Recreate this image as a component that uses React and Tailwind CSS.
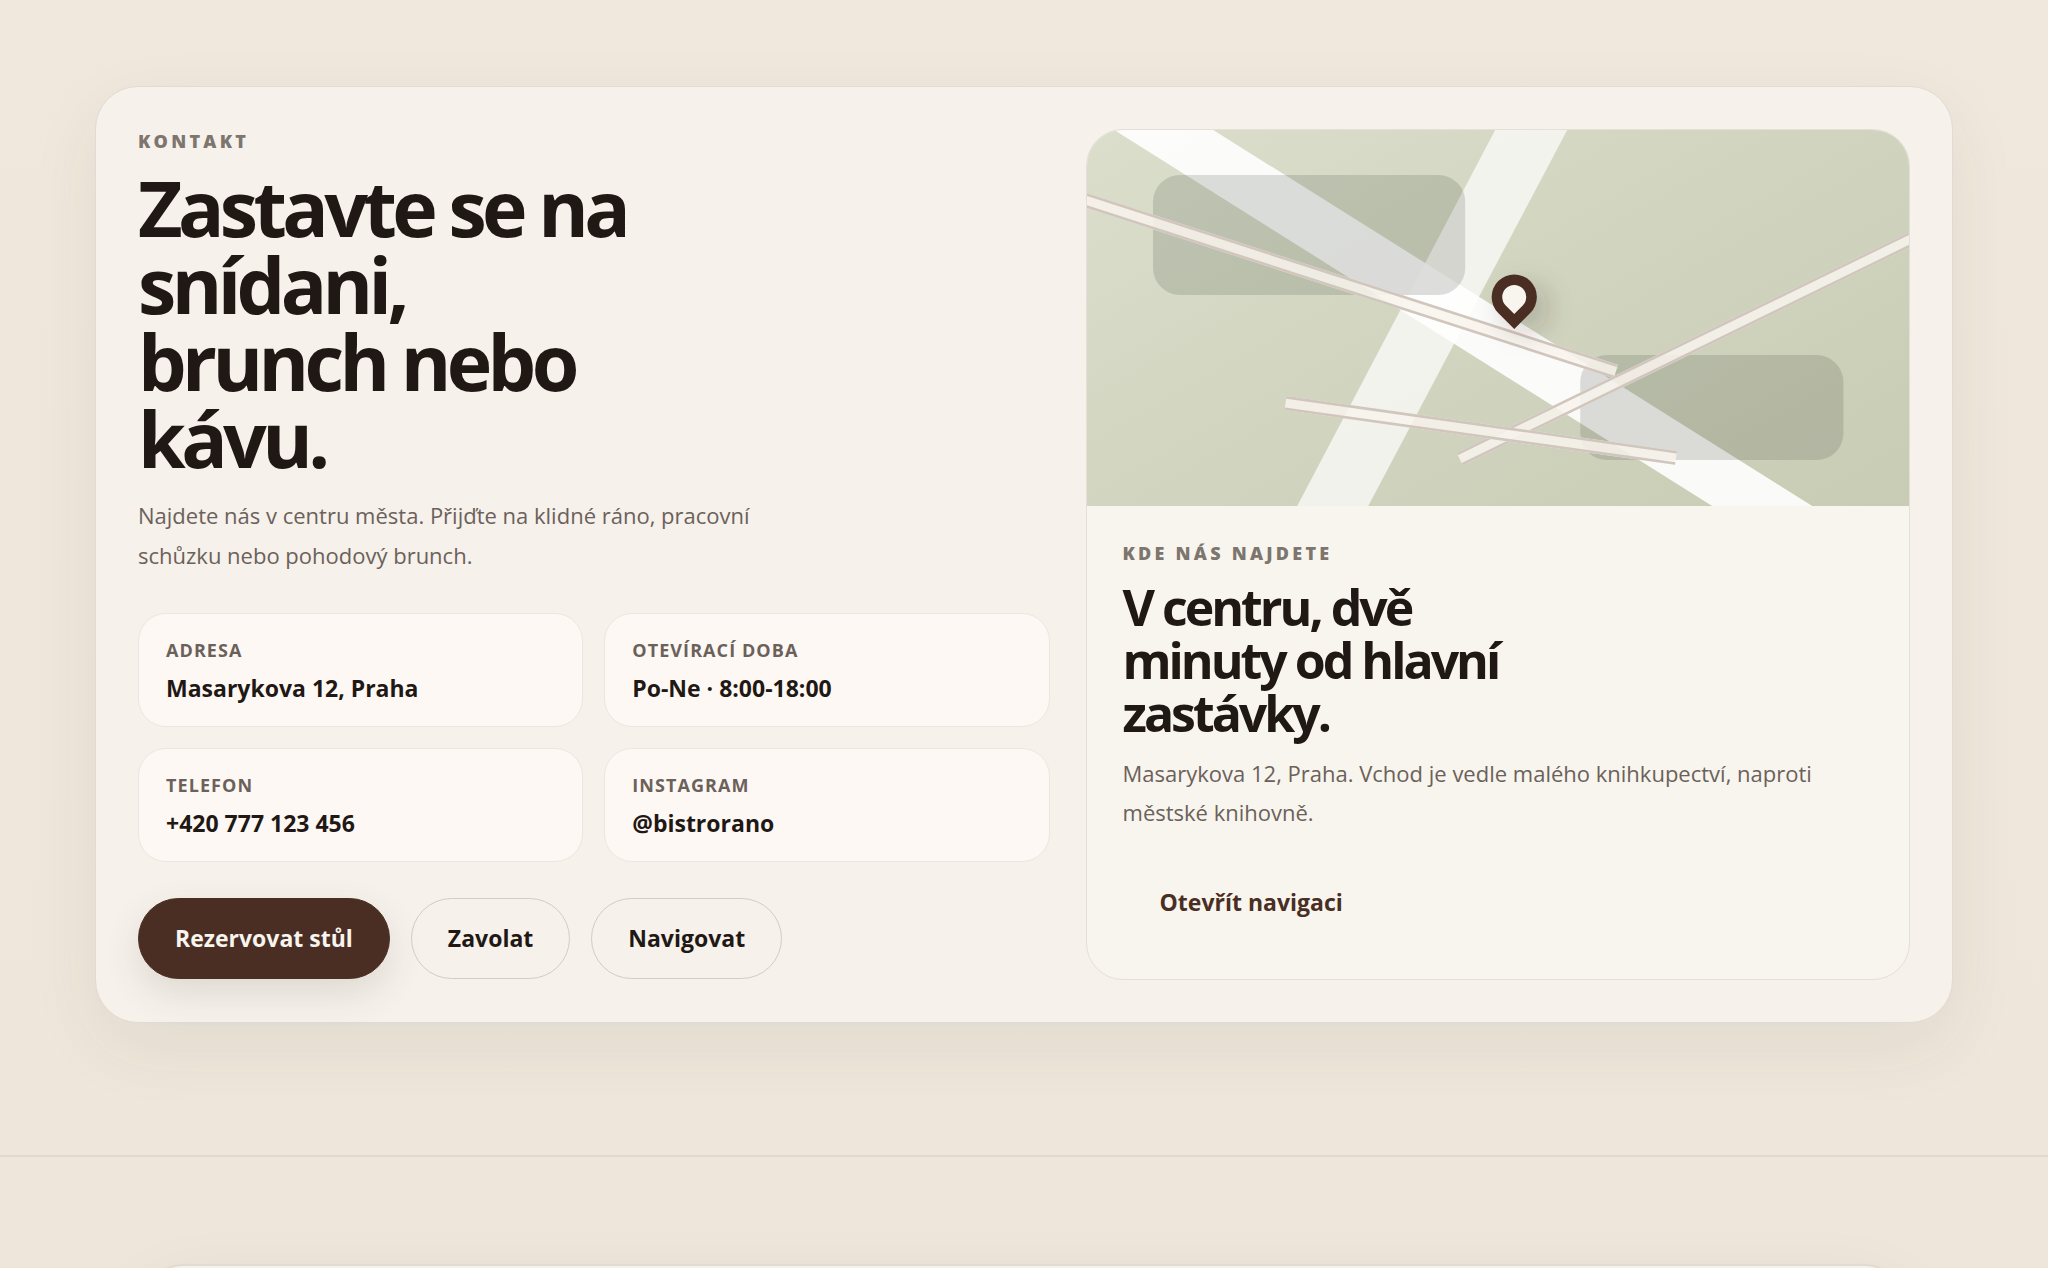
const contacts = [
  { label: 'Adresa', value: 'Masarykova 12, Praha' },
  { label: 'Otevírací doba', value: 'Po-Ne · 8:00-18:00' },
  { label: 'Telefon', value: '+420 777 123 456' },
  { label: 'Instagram', value: '@bistrorano' },
]

export default function App() {
  return (
    <div className="h-screen overflow-hidden bg-linear-to-b from-[#f0e8dc] to-[#eee6da] font-['Open_Sans','Noto_Sans',sans-serif] text-[#1f1814]">
      <main className="px-[95px] pt-[86px] pb-[132px]">
        <section className="grid grid-cols-[911fr_824fr] gap-9 rounded-[43px] border border-[#dfdcd4] bg-[#f6f1eb] p-[42px] shadow-[0_24px_72px_rgba(60,60,40,0.07)]">
          <ContactInfo />
          <LocationCard />
        </section>
      </main>
      <footer className="border-t-2 border-[#e2d9ce] px-[141px] pt-[107px]">
        <div className="h-40 rounded-[43px] border-2 border-[#dfdcd4] bg-[#f6f1eb] shadow-[0_24px_72px_rgba(60,60,40,0.07)]" />
      </footer>
    </div>
  )
}

function ContactInfo() {
  return (
    <div>
      <Eyebrow>Kontakt</Eyebrow>
      <h2 className="mt-4 max-w-[500px] text-[77px] leading-[77px] font-bold tracking-[-0.06em]">
        Zastavte se na snídani, brunch nebo kávu.
      </h2>
      <p className="mt-[18px] max-w-[640px] text-[22px] leading-10 text-[#6b615a]">
        Najdete nás v centru města. Přijďte na klidné ráno, pracovní schůzku nebo pohodový brunch.
      </p>
      <dl className="mt-[38px] grid grid-cols-2 gap-[21px]">
        {contacts.map(c => (
          <div key={c.label} className="rounded-[28px] border border-[#ece6e0] bg-[#fdf8f4] px-[27px] py-5">
            <dt className="text-[18px] leading-8 font-bold tracking-[0.06em] text-[#6b615a] uppercase">{c.label}</dt>
            <dd className="mt-1 text-[23px] leading-9 font-bold">{c.value}</dd>
          </div>
        ))}
      </dl>
      <div className="mt-9 flex flex-wrap gap-[21px]">
        <PillButton className="border-[#4a2e24] bg-[#4a2e24] text-[#f8f4ee] shadow-[0_14px_36px_rgba(60,60,40,0.13)]">
          Rezervovat stůl
        </PillButton>
        <PillButton className="border-[#d3ccc4]">Zavolat</PillButton>
        <PillButton className="border-[#d3ccc4]">Navigovat</PillButton>
      </div>
    </div>
  )
}

function LocationCard() {
  return (
    <article className="overflow-hidden rounded-[37px] border border-[#e4e0d9] bg-[#f8f5ee]">
      <CityMap />
      <div className="px-9 pt-[35px] pb-9">
        <Eyebrow>Kde nás najdete</Eyebrow>
        <h3 className="mt-4 max-w-[400px] text-[50px] leading-[53px] font-bold tracking-[-0.06em]">
          V centru, dvě minuty od hlavní zastávky.
        </h3>
        <p className="mt-[14px] text-[22px] leading-[39px] text-[#6b615a]">
          Masarykova 12, Praha. Vchod je vedle malého knihkupectví, naproti městské knihovně.
        </p>
        <PillButton className="mt-[30px] border-transparent text-[#4a2e24]">Otevřít navigaci</PillButton>
      </div>
    </article>
  )
}

function Eyebrow({ children }) {
  return (
    <p className="text-[18px] leading-6 font-extrabold tracking-[0.18em] text-[#7d756e] uppercase">{children}</p>
  )
}

function PillButton({ className, children }) {
  return (
    <button
      type="button"
      className={`h-[81px] rounded-full border px-9 text-[23px] font-bold ${className}`}
    >
      {children}
    </button>
  )
}

// A street: light fill with a thin edge on both long sides, starting at x, y.
function Road({ x, y, length, angle }) {
  return (
    <g transform={`translate(${x} ${y}) rotate(${angle})`}>
      <rect y="-7" width={length} height="14" fill="#f8f3ec" fillOpacity="0.86" />
      <rect y="-7" width={length} height="2.6" fill="#d0c6be" />
      <rect y="4.4" width={length} height="2.6" fill="#d0c6be" />
    </g>
  )
}

function CityMap() {
  return (
    <svg
      viewBox="0 0 822 376"
      preserveAspectRatio="xMidYMid slice"
      className="block h-[376px] w-full"
      aria-hidden="true"
    >
      <defs>
        <linearGradient id="land" gradientUnits="userSpaceOnUse" x1="227" y1="-132" x2="595" y2="508">
          <stop offset="0" stopColor="#dadecb" />
          <stop offset="1" stopColor="#c8ccb4" />
        </linearGradient>
        <filter id="pinShadow" x="-150%" y="-150%" width="400%" height="400%">
          <feGaussianBlur stdDeviation="13" />
        </filter>
      </defs>
      <rect width="822" height="376" fill="url(#land)" />
      <polygon points="408,0 480,0 281,376 210,376" fill="#fff" fillOpacity="0.7" />
      <polygon points="27,0 126,0 725,376 625,376" fill="#fff" fillOpacity="0.9" />
      <rect x="66" y="45" width="312" height="120" rx="27" fill="#4a4e40" fillOpacity="0.18" />
      <rect x="493" y="225" width="263" height="105" rx="27" fill="#4a4e40" fillOpacity="0.18" />
      <Road x={-10} y={67.5} length={566} angle={17.9} />
      <Road x={372.5} y={329} length={520} angle={-26} />
      <Road x={198.5} y={273} length={394} angle={8} />
      <circle cx="438" cy="178" r="23" fill="#2c241c" fillOpacity="0.22" filter="url(#pinShadow)" />
      <g transform="translate(427 167)">
        <path d="M0 32 L-16 16 A22.6 22.6 0 1 1 16 16 Z" fill="#4a2e24" />
        <path d="M0 17 L-8.5 8.5 A12 12 0 1 1 8.5 8.5 Z" fill="#f8f5ee" />
      </g>
    </svg>
  )
}
